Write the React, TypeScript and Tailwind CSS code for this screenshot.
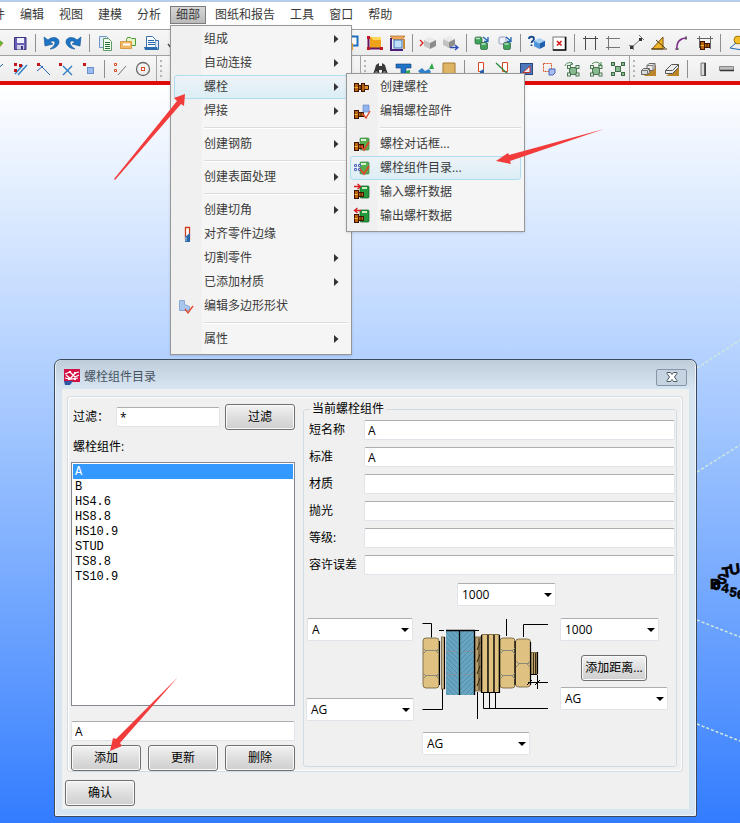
import React, { ReactNode } from "react";

/* ---------- toolbar drawings, all on a 20 x 20 grid ---------- */

const cube = (x: number, y: number, s: number, c: [string, string, string]) => (
  <g>
    <path d={`M${x} ${y + s * 0.25}L${x + s / 2} ${y}L${x + s} ${y + s * 0.25}L${x + s / 2} ${y + s * 0.5}Z`} fill={c[0]} />
    <path d={`M${x} ${y + s * 0.25}L${x + s / 2} ${y + s * 0.5}V${y + s}L${x} ${y + s * 0.75}Z`} fill={c[1]} />
    <path d={`M${x + s} ${y + s * 0.25}L${x + s / 2} ${y + s * 0.5}V${y + s}L${x + s} ${y + s * 0.75}Z`} fill={c[2]} />
  </g>
);
const GREY: [string, string, string] = ["#e9e9e9", "#c2c2c2", "#8c8c8c"];
const BLUE: [string, string, string] = ["#a9d2f5", "#4f97dd", "#1c5fae"];

const greenBox = (x: number, y: number) => (
  <g>
    <rect x={x} y={y} width="7" height="7" rx="1.500" fill="#3fa25a" stroke="#3a6b48" strokeWidth=".8" />
    <path d={`M${x + 1} ${y + 1.5}h4`} stroke="#b7e3bf" strokeWidth="1.500" />
  </g>
);
const whiteBox = (x: number, y: number) => (
  <rect x={x} y={y} width="7" height="7" rx="1.500" fill="#eef1fa" stroke="#7d82ab" strokeWidth=".8" />
);
const boltShape = (x: number, y: number) => (
  <g transform={`translate(${x} ${y})`}>
    <rect x="0.5" y="0.5" width="4" height="8" fill="#b8650f" stroke="#3f1400" />
    <path d="M0.5 4.5H4.5" stroke="#f0b030" />
    <rect x="4.5" y="2.5" width="5" height="4" fill="#b8650f" stroke="#3f1400" />
    <path d="M7 2.5V6.5" stroke="#3f1400" />
  </g>
);
const greenNode = (
  <g fill="#86ba8e" stroke="#3f6b48" strokeWidth=".9">
    <rect x="7.5" y="8.5" width="7" height="7" />
    <rect x="5.5" y="6.5" width="3" height="3" fill="#dff2df" />
    <rect x="14" y="6.500" width="3" height="3" fill="#dff2df" />
    <rect x="5.5" y="14" width="3" height="3" fill="#dff2df" />
    <rect x="14" y="14" width="3" height="3" fill="#dff2df" />
  </g>
);

const art: Record<string, ReactNode> = {
  open: (
    <>
      <path d="M4 6h6l6 4-6 7H4z" fill="#f1d36b" stroke="#b58a24" />
      <path d="M10 5l6 5-4 4z" fill="#62b53d" />
    </>
  ),
  save: (
    <>
      <path d="M4.500 4.500h11.500v12h-11.500z" fill="#6a62b4" stroke="#3a3480" />
      <rect x="7" y="5" width="7" height="5" fill="#eef0fb" />
      <rect x="7" y="12" width="7" height="4.500" fill="#cfd1e6" />
      <rect x="11" y="13" width="2" height="3.500" fill="#3a3480" />
    </>
  ),
  undo: (
    <path d="M3 4l1 9 8-2-3-2c3-2 5-1 5 1 0 2-2 4-5 6 5 0 9-4 9-7 0-5-7-6-11-2z" fill="#1e74c4" stroke="#0f4f93" strokeWidth=".6" />
  ),
  redo: (
    <path d="M17 4l-1 9-8-2 3-2c-3-2-5-1-5 1 0 2 2 4 5 6-5 0-9-4-9-7 0-5 7-6 11-2z" fill="#1e74c4" stroke="#0f4f93" strokeWidth=".6" />
  ),
  copy: (
    <>
      <path d="M4.500 3.500h7l2 2v9h-9z" fill="#e3edf9" stroke="#6d94c4" />
      <path d="M8.500 5.500h5l3 3v9h-8z" fill="#f4fff0" stroke="#5c9a66" />
      <path d="M10 9.500h5M10 11.500h5M10 13.500h5M10 15.500h5" stroke="#1f6e3a" />
    </>
  ),
  folders: (
    <>
      <path d="M8.500 6.500l1-2h3l1 1h4v7h-9z" fill="#e6f6c9" stroke="#4d9b34" />
      <path d="M2.500 8.500h11v7h-11z" rx="1" fill="#f2b866" stroke="#d59a45" />
      <path d="M5 10.500h7v2H5z" fill="#fff" />
    </>
  ),
  printDoc: (
    <>
      <path d="M5.500 3.500h6l3 3v8h-9z" fill="#f7fbff" stroke="#3f6fa8" />
      <path d="M7 7.500h6M7 9.500h9M7 11.500h9" stroke="#2464a8" />
      <path d="M14.500 7.500h3v9h-3" fill="#dfeaf7" stroke="#3f6fa8" />
      <path d="M3 14h13l1 3H4z" fill="#2b6aae" />
    </>
  ),
  cut: <path d="M6 4c5 0 3 6 0 6m-2 1l4 5M8 10c4 0 5 6 1 7" stroke="#555" strokeWidth="1.500" fill="none" />,
  screen: (
    <>
      <rect x="5.500" y="3.500" width="11" height="9" fill="#fff" stroke="#1f6fc0" strokeWidth="2" />
      <path d="M5 10h7v7H5z" fill="#f2a829" />
    </>
  ),
  yellowFrame: (
    <>
      <path d="M6 4h11v11H6z" fill="#eda21a" />
      <path d="M7 4l2 3h8V4z" fill="#ffd75a" />
      <path d="M4.500 4v13M3 15.500h15" stroke="#6a1460" strokeWidth="2" />
      <path d="M3 3h3v3H3zM3 14h3v3H3zM16 14h3v3h-3z" fill="#c01626" />
    </>
  ),
  orangeFrame: (
    <>
      <path d="M3 3h15l-3 4H7z" fill="#f0a75a" stroke="#a05c16" strokeWidth=".6" />
      <rect x="7" y="7" width="8" height="8" fill="#bfe0fb" stroke="#3d74b5" />
      <path d="M4 5v12h12" stroke="#46207a" strokeWidth="2" fill="none" />
      <path d="M17 6v10" stroke="#c98a3c" strokeWidth="2" fill="none" />
    </>
  ),
  cubeIn: (
    <>
      <path d="M2 7l3 3-3 3" stroke="#d81f1f" strokeWidth="1.300" fill="none" />
      {cube(6, 4, 12, GREY)}
    </>
  ),
  cubeOut: (
    <>
      {cube(2, 3, 12, GREY)}
      <path d="M9 14.500h7M14 12l3 2.500-3 2.500" stroke="#2c4fb8" strokeWidth="1.300" fill="none" />
    </>
  ),
  greenPair: (
    <>
      {greenBox(3, 4)}
      {greenBox(8.500, 9.500)}
      <path d="M11 4l5 4m0-4v4.500h-4" stroke="#1f66b5" strokeWidth="1.300" fill="none" />
    </>
  ),
  whitePair: (
    <>
      {whiteBox(4, 4)}
      {greenBox(8.500, 9.500)}
      <path d="M11 4l5 4m0-4v4.500h-4" stroke="#1f66b5" strokeWidth="1.300" fill="none" />
    </>
  ),
  help: (
    <>
      <path d="M3 6c0-3 5-3 5 0 0 2-2.500 2-2.500 4M5.500 11.500v1.500" stroke="#174a8c" strokeWidth="1.800" fill="none" />
      {cube(8, 5, 11, BLUE)}
    </>
  ),
  close: (
    <>
      <rect x="4" y="4" width="13" height="13" fill="#fff" stroke="#777" />
      <path d="M16.500 4v13H4" stroke="#111" strokeWidth="1.500" fill="none" />
      <path d="M8 8l4.500 4.500M12.500 8L8 12.500" stroke="#d81f1f" strokeWidth="1.700" />
    </>
  ),
  dimH: <path d="M5.500 3v14M15.500 3v14M3 5.500h15" stroke="#4a4a4a" fill="none" />,
  dimV: <path d="M5.500 3v14M3 5.500h14M3 14.500h14" stroke="#777" fill="none" />,
  dimFree: (
    <>
      <path d="M5 15L16 5" stroke="#777" />
      <path d="M3 12l5 5M13 2l5 5" stroke="#777" />
      <path d="M4 12.500h3.500v3.500H4zM13 5h3v3h-3z" fill="#333" />
    </>
  ),
  angle: (
    <>
      <path d="M3 16L14 4v12z" fill="#f0b52a" stroke="#7a5108" />
      <path d="M2 16h16M7 7l9 8" stroke="#51370a" />
    </>
  ),
  arc: (
    <>
      <path d="M5 17C4 8 9 5 15 5" stroke="#7a2687" strokeWidth="1.500" fill="none" />
      <path d="M14 3v4M3 16h4" stroke="#555" />
    </>
  ),
  dimBolt: (
    <>
      <path d="M4.500 3v12M15.500 3v13M2 5.500h16" stroke="#666" />
      {boltShape(5, 8)}
    </>
  ),
  pin: (
    <>
      <circle cx="12" cy="7" r="4" fill="#f4be2a" stroke="#a77a10" />
      <path d="M10 10l-6 5 12 2" stroke="#1f66b5" fill="none" />
    </>
  ),
  snapA: <path d="M4 16L16 5" stroke="#2b66b5" />,
  snapB: (
    <>
      <path d="M5 15L13 6M8 16L17 6" stroke="#2b7cc5" strokeWidth="1.300" />
      <path d="M4 4h3v3H4zM9 5h3v3H9zM4 10h3v3H4z" fill="#c01818" />
    </>
  ),
  snapC: (
    <>
      <path d="M7 6l10 10M4 12l6-5" stroke="#2b66b5" />
      <path d="M4 4h3v3H4z" fill="#c01818" />
    </>
  ),
  snapD: (
    <>
      <path d="M7 7l9 9M7 16l9-9" stroke="#2b7cc5" strokeWidth="1.300" />
      <path d="M3 4h3v3H3z" fill="#c01818" />
    </>
  ),
  snapE: (
    <>
      <rect x="8.500" y="8.500" width="6" height="6" fill="#9bbcf0" stroke="#6d8fd0" />
      <path d="M4 4h3v3H4z" fill="#c01818" />
    </>
  ),
  snapF: (
    <>
      <path d="M4.500 4.500h2v2h-2zM4.500 10.500h2v2h-2z" fill="#fff" stroke="#d84a1f" />
      <path d="M8 16l8-9" stroke="#777" />
    </>
  ),
  target: (
    <>
      <circle cx="10" cy="10" r="6.500" fill="none" stroke="#6a6a6a" strokeWidth="1.300" />
      <rect x="8.500" y="8.500" width="3" height="3" fill="#fff" stroke="#d84a1f" />
    </>
  ),
  binoculars: (
    <>
      <path d="M6 6l3-2v3h3V4l3 2 2 7v3h-5v-5H9v5H4v-3z" fill="#3a3a3a" />
      <circle cx="6.500" cy="14" r="2.500" fill="#777" stroke="#222" />
      <circle cx="14.500" cy="14" r="2.500" fill="#777" stroke="#222" />
    </>
  ),
  beam: (
    <>
      <path d="M3 5h15v4h-5v7H8V9H3z" fill="#1f72c4" stroke="#0e3f78" strokeWidth=".6" />
      <path d="M13 12l4-1v6h-4z" fill="#2fa84a" />
    </>
  ),
  weldTool: (
    <>
      <path d="M2 12l4-3 3 3 4-2 2 3-4 4-3-3-3 1z" fill="#2f80cc" />
      <path d="M13 10l3-6 2 6z" fill="#2fa84a" />
    </>
  ),
  plate: <path d="M4 4h12v13H4z" fill="#ddb565" stroke="#a67a2c" />,
  redCol: (
    <>
      <path d="M8.500 3.500h5v9h-5z" fill="#fff" stroke="#d84a1f" />
      <path d="M10 12l4-2v7h-4z" fill="#2f62ad" />
    </>
  ),
  greenCut: (
    <>
      <path d="M9.500 3.500h5v9h-5z" fill="#fff" stroke="#d84a1f" />
      <path d="M3 4l14 13" stroke="#2c8a3f" strokeWidth="1.300" />
    </>
  ),
  triangle: (
    <>
      <rect x="4.500" y="4.500" width="12" height="11" fill="#4d78bd" stroke="#29477a" />
      <path d="M7 13.500L14 7v6.500z" fill="#f0f4fb" stroke="#c03020" />
    </>
  ),
  dashBox: (
    <>
      <rect x="4.500" y="4.500" width="8" height="8" fill="none" stroke="#d84a1f" strokeDasharray="2 1" />
      <path d="M10 10h6v4l-2 2h-4z" fill="#a9bdf2" stroke="#4c64b8" />
    </>
  ),
  meshA: (
    <>
      {greenNode}
      <path d="M3 7c1-4 6-4 8-2M9 3l2 2-3 1" stroke="#4a8a55" fill="none" />
    </>
  ),
  meshB: (
    <>
      {greenNode}
      <path d="M7 5c3-3 7-2 9 1M16 3v3h-3" stroke="#4a8a55" fill="none" />
    </>
  ),
  meshC: (
    <g fill="#86ba8e" stroke="#3f6b48">
      <path d="M5 5l10 10M15 5L5 15" />
      <rect x="7.500" y="7.500" width="5" height="5" />
      <rect x="3.500" y="3.500" width="3" height="3" />
      <rect x="13.500" y="3.500" width="3" height="3" />
      <rect x="3.500" y="13.500" width="3" height="3" />
      <rect x="13.500" y="13.500" width="3" height="3" />
    </g>
  ),
  boxes: (
    <>
      <path d="M5 17h12V6z" fill="#b9842a" />
      <path d="M8 6.500l2-2h6v5l-2 2H8z" fill="#ececec" stroke="#666" />
      <path d="M8 6.500h6v5M14 6.500l2-2" stroke="#777" />
      <path d="M2.500 11.500l2-2h6v4l-2 2h-6z" fill="#dcdcdc" stroke="#666" />
      <path d="M2.500 11.500h6v4M8.500 11.500l2-2" stroke="#777" />
    </>
  ),
  slab: (
    <>
      <path d="M4 17h13V8z" fill="#b98428" />
      <path d="M3.500 11.500l6-6h7v3l-6 6h-7z" fill="#ededed" stroke="#555" />
      <path d="M3.500 11.500h7l6-6" stroke="#555" fill="none" />
    </>
  ),
  colPart: (
    <>
      <path d="M8 4h4.500v12.500H8z" fill="#dcdcdc" stroke="#777" />
      <path d="M12 4v13" stroke="#333" strokeWidth="1.500" />
    </>
  ),
  beamPart: (
    <>
      <path d="M3.500 7.500h14v4h-14z" fill="#bdbdbd" stroke="#888" />
      <path d="M4 11.500h14" stroke="#333" strokeWidth="1.500" />
    </>
  ),
  bolts: (
    <g>
      {boltShape(2, 6)}
      <rect x="9.500" y="6.500" width="3" height="8" fill="#b8650f" stroke="#3f1400" />
      <path d="M12.500 8.500h4v4h-4" fill="#e0912a" stroke="#3f1400" />
    </g>
  ),
  boltEdit: (
    <>
      {boltShape(2, 9)}
      <path d="M11 4h6v7h-6z" fill="#8fb4ee" stroke="#5a82c4" strokeWidth=".6" />
      <path d="M11 13l3 4 4-7" stroke="#e0452a" strokeWidth="1.300" fill="none" />
    </>
  ),
  boltDialog: (
    <>
      <rect x="8" y="4" width="9" height="12" rx="1" fill="#55ad4b" stroke="#3f7f47" strokeWidth=".7" />
      <path d="M9 6h5" stroke="#d4f2cf" strokeWidth="2" />
      {boltShape(2, 8)}
      <path d="M9 12l3 4 5-8" stroke="#e0452a" strokeWidth="1.700" fill="none" />
    </>
  ),
  boltCatalog: (
    <>
      <rect x="8" y="4" width="9" height="12" rx="1" fill="#55ad4b" stroke="#3f7f47" strokeWidth=".7" />
      <path d="M9 6h5" stroke="#d4f2cf" strokeWidth="2" />
      <path d="M2.500 6.500h2v2h-2zM6.500 6.500h2v2h-2zM2.500 10.500h2v2h-2zM6.500 10.500h2v2h-2z" fill="#dfe6fb" stroke="#5366bd" />
      <path d="M8 11l4 5 5-8" stroke="#e0452a" strokeWidth="1.700" fill="none" />
    </>
  ),
  boltImport: (
    <>
      <rect x="8" y="4" width="9" height="12" rx="1" fill="#239a3c" stroke="#0d5c20" strokeWidth=".7" />
      <path d="M10 6h5" stroke="#c5eec5" strokeWidth="2" />
      {boltShape(2, 8)}
      <path d="M2 4.500h6M5.500 2l3 2.500-3 2.500" stroke="#d81f1f" strokeWidth="1.300" fill="none" />
    </>
  ),
  boltExport: (
    <>
      <rect x="8" y="4" width="9" height="12" rx="1" fill="#239a3c" stroke="#0d5c20" strokeWidth=".7" />
      <path d="M10 6h5" stroke="#c5eec5" strokeWidth="2" />
      {boltShape(2, 8)}
      <path d="M3 4.500h6M5.500 2l-3 2.500 3 2.500" stroke="#d81f1f" strokeWidth="1.300" fill="none" />
    </>
  ),
  alignEdge: (
    <>
      <path d="M9.500 3.500h4v12h-4z" fill="#fff" stroke="#cc3d1c" strokeWidth="1.300" />
      <path d="M9 18v-5l5-4v9z" fill="#2a66a8" />
      <path d="M10 17v-4" stroke="#bcd6f2" />
    </>
  ),
  polygonEdit: (
    <>
      <path d="M3.500 4.500h5v4l5 2v4h-10z" fill="#a8c6ee" stroke="#8aa8d4" />
      <path d="M9 13l3 4 5-7" stroke="#e0452a" strokeWidth="1.300" fill="none" />
    </>
  ),
};

const Glyph = ({ name }: { name: string }) => (
  <svg viewBox="0 0 20 20" className="h-5 w-5 shrink-0" fill="none" aria-hidden="true">
    {art[name]}
  </svg>
);

/* ---------- toolbars ---------- */

const Tools = ({ items }: { items: string[] }) => (
  <>
    {items.map((name, i) =>
      name === "|" ? (
        <span key={i} className="flex w-2 shrink-0 items-center justify-center">
          <span className="h-[18px] w-px bg-[#8f8f8f]" />
        </span>
      ) : (
        <button key={i} type="button" aria-label={name} className="flex w-[23px] shrink-0 items-center justify-center">
          <Glyph name={name} />
        </button>
      ),
    )}
  </>
);

const Grip = () => (
  <span className="flex w-2 shrink-0 flex-col items-center justify-center gap-[3px] border-l border-[#a5a5a5]">
    <span className="h-[2px] w-[2px] bg-[#b5b5b5]" />
    <span className="h-[2px] w-[2px] bg-[#b5b5b5]" />
    <span className="h-[2px] w-[2px] bg-[#b5b5b5]" />
    <span className="h-[2px] w-[2px] bg-[#b5b5b5]" />
  </span>
);

const barClass = "flex h-[26px] overflow-hidden border-t border-[#a0a0a0] bg-linear-to-b from-[#f7f7f7] to-[#ececec]";

/* ---------- menus ---------- */

type Entry = { label: string; icon?: string; arrow?: boolean; active?: boolean; sub?: Entry[] } | null;

const boltMenu: Entry[] = [
  { label: "创建螺栓", icon: "bolts" },
  { label: "编辑螺栓部件", icon: "boltEdit" },
  null,
  { label: "螺栓对话框...", icon: "boltDialog" },
  { label: "螺栓组件目录...", icon: "boltCatalog", active: true },
  { label: "输入螺杆数据", icon: "boltImport" },
  { label: "输出螺杆数据", icon: "boltExport" },
];

const detailMenu: Entry[] = [
  { label: "组成", arrow: true },
  { label: "自动连接", arrow: true },
  { label: "螺栓", arrow: true, active: true, sub: boltMenu },
  { label: "焊接", arrow: true },
  null,
  { label: "创建钢筋", arrow: true },
  null,
  { label: "创建表面处理", arrow: true },
  null,
  { label: "创建切角", arrow: true },
  { label: "对齐零件边缘", icon: "alignEdge" },
  { label: "切割零件", arrow: true },
  { label: "已添加材质", arrow: true },
  { label: "编辑多边形形状", icon: "polygonEdit" },
  null,
  { label: "属性", arrow: true },
];

const Menu = ({ entries, place }: { entries: Entry[]; place: string }) => (
  <ul
    role="menu"
    className={`absolute border border-[#979797] bg-[#f5f5f5] bg-linear-to-r from-[#f0f0f0] from-[30px] to-[#f5f5f5] to-[31px] px-[3px] pt-px pb-[3px] ${place}`}
  >
    {entries.map((e, i) =>
      e === null ? (
        <li key={i} role="separator" className="flex h-[9px] items-center pl-[30px]">
          <span className="h-[2px] w-full border-b border-white bg-[#dcdcdc]" />
        </li>
      ) : (
        <li key={i} role="none" className="relative">
          <button
            type="button"
            role="menuitem"
            className={`flex h-6 w-full items-center rounded-[3px] border text-left whitespace-nowrap ${
              e.active ? "border-[#aedcf0] bg-linear-to-b from-[#edf3f7] to-[#dceef5]" : "border-transparent"
            }`}
          >
            <span className="flex w-[29px] shrink-0 justify-start pl-px">{e.icon && <Glyph name={e.icon} />}</span>
            <span className="flex-1">{e.label}</span>
            {e.arrow && (
              <svg viewBox="0 0 5 8" className="mr-2 h-2 w-[5px]" aria-hidden="true">
                <path d="M0 0l4.500 4L0 8z" fill="#333" />
              </svg>
            )}
          </button>
          {e.sub && <Menu entries={e.sub} place="-top-[2px] left-[172px] w-[179px] shadow-sm" />}
        </li>
      ),
    )}
  </ul>
);

/* ---------- form parts ---------- */

const fieldClass =
  "h-5 min-w-0 rounded-[2px] border border-[#e2e3ea] border-t-[#abadb3] bg-white px-[3px] text-black outline-none";

const Push = ({ children, size = "w-[70px]" }: { children: ReactNode; size?: string }) => (
  <button
    type="button"
    className={`h-[26px] shrink-0 rounded-[3px] border border-[#707070] bg-linear-to-b from-[#f3f3f3] via-[#dedede] via-50% to-[#cfcfcf] text-center whitespace-nowrap shadow-[inset_0_0_0_1px_#fafafa] ${size}`}
  >
    {children}
  </button>
);

const Drop = ({ label, value, size }: { label: string; value: string; size: string }) => (
  <span className={`relative block shrink-0 ${size}`}>
    <select
      aria-label={label}
      defaultValue={value}
      className="h-[23px] w-full appearance-none rounded-[2px] border border-[#e2e3ea] border-t-[#abadb3] bg-white px-1 text-black outline-none"
    >
      <option>{value}</option>
    </select>
    <svg viewBox="0 0 8 4" className="pointer-events-none absolute top-[10px] right-[4px] h-1 w-2" aria-hidden="true">
      <path d="M0 0h8L4 4z" fill="#000" />
    </svg>
  </span>
);

const assemblies = ["A", "B", "HS4.6", "HS8.8", "HS10.9", "STUD", "TS8.8", "TS10.9"];
const fields = [
  ["短名称", "A"],
  ["标准", "A"],
  ["材质", ""],
  ["抛光", ""],
  ["等级:", ""],
  ["容许误差", ""],
];

/* Exploded bolt: head, washer, plates, nuts and their leader lines */
const BoltDiagram = () => (
  <svg viewBox="0 0 128 104" className="h-[104px] w-[128px]" role="img" aria-label="螺栓">
    <defs>
      <pattern id="hatchA" width="5" height="5" patternUnits="userSpaceOnUse">
        <path d="M0 0l5 5" stroke="#4b88a1" strokeWidth=".7" />
      </pattern>
      <pattern id="hatchB" width="5" height="5" patternUnits="userSpaceOnUse">
        <path d="M5 0L0 5" stroke="#4b88a1" strokeWidth=".7" />
      </pattern>
    </defs>
    <g fill="none" stroke="#000" strokeWidth="1">
      <path d="M0.500 5.500h9v14M0.500 91.500h20v-21M84.500 1v17M101.500 19V6.500h24.500M55.500 74v27M61.500 75v15.500h64.500M67.500 75v15M73.500 75v15" />
      <path d="M17 12.500h41" strokeDasharray="5 2" />
    </g>
    <g fill="#dfc182" stroke="#6d5a34" strokeWidth=".8">
      <rect x="1" y="20" width="16" height="50" rx="3" />
      <rect x="19.500" y="19" width="3" height="52" fill="#cbb48a" />
      <rect x="53" y="19" width="6" height="54" fill="#b89e70" />
      <rect x="60" y="16.500" width="6" height="58" />
      <rect x="66" y="16.500" width="6" height="58" />
      <rect x="72" y="16.500" width="5" height="58" />
      <rect x="78" y="20" width="15" height="50" rx="3" />
      <rect x="93.500" y="21" width="15" height="48" rx="3" />
      <rect x="109" y="34.500" width="6" height="22" fill="#b8a071" />
    </g>
    <path d="M111.500 35v21M113.500 35v21M57 20v52M55 32l3-8M55 44l3-8M55 56l3-8M55 68l3-8" stroke="#3b2c10" />
    <path
      d="M17.500 23v44M22.500 19v52M93 23v44M108.500 24v43M77.500 17v58M59.500 17v58M66 17v58M72 17v58M115.500 34v22M60 74.500h17"
      stroke="#000"
      strokeWidth="1.200"
    />
    <path d="M3 32.500h13M3 57.500h13M80 32.500h11M80 57.500h11M96 45.500h11" stroke="#8a8a7a" />
    <path
      d="M1 30l3 3-3 3M17 30l-3 3 3 3M1 55l3 3-3 3M17 55l-3 3 3 3M78 30l3 3-3 3M93 30l-3 3 3 3M78 55l3 3-3 3M93 55l-3 3 3 3M94 43l3 3-3 3M108 43l-3 3 3 3"
      stroke="#8a8a7a"
      fill="none"
    />
    <rect x="24" y="12" width="29" height="65" fill="#68a3bf" />
    <rect x="24" y="12" width="14" height="65" fill="url(#hatchA)" />
    <rect x="38" y="12" width="15" height="65" fill="url(#hatchB)" />
    <path d="M24 33.500h29M24 56.500h29" stroke="#8a8f98" strokeDasharray="4 2" />
    <path d="M24 12.500h29M37.500 12v65M52.500 12v65" stroke="#000" strokeWidth="1.300" fill="none" />
    <path d="M106 64.500h20M115.500 57v14M105 67l5-5M113 67l5-5M109 56.500h6" stroke="#000" fill="none" />
  </svg>
);

const Dialog = () => (
  <section
    role="dialog"
    aria-label="螺栓组件目录"
    className="absolute top-[274px] left-[54px] w-[643px] rounded-t-[7px] rounded-b-[2px] border border-[#3c4a5a] bg-[#d7e4f2] px-[7px] pb-[7px] shadow-[inset_0_0_0_1px_#eef4fa]"
  >
    <header className="-mx-[6px] flex h-7 items-center rounded-t-[6px] bg-linear-to-b from-[#bfcdda] to-[#d7e4f2] pt-[6px] pr-2 pl-[8px]">
      <svg viewBox="0 0 16 16" className="h-4 w-4" aria-hidden="true">
        <path d="M0 0h16v13H0z" fill="#d41145" />
        <path d="M0 12h9l-3 4H1z" fill="#2d57a5" />
        <path d="M1 5l5-2 5 5 4-2M1 9l5 1 5-6 4-1M2 6l5 4 7-1" stroke="#fff" strokeWidth="1.200" fill="none" />
        <path d="M5 2h2v2H5zM10 3h2v2h-2zM4 9h2v2H4zM10 9h2v2h-2z" fill="#fff" />
      </svg>
      <h1 className="ml-1 flex-1 text-[#46535f]">螺栓组件目录</h1>
      <button
        type="button"
        aria-label="关闭"
        className="flex h-[17px] w-[31px] items-center justify-center rounded-[2px] border border-[#8595a8] bg-[#c6d4e2]"
      >
        <svg viewBox="0 0 12 10" className="h-[10px] w-3" aria-hidden="true">
          <path d="M1 .5h3.500L6 2.500 7.500.5H11v1L8.500 5 11 8.500v1H7.500L6 7.500l-1.500 2H1v-1L3.500 5 1 1.500z" fill="#fff" stroke="#4a5866" />
        </svg>
      </button>
    </header>

    <div className="mt-px bg-[#f0f0f0] px-[3px] pt-[7px] pb-[3px]">
      <div className="mr-[3px] ml-[2px] flex rounded-[3px] border border-[#d2dbe2] pt-[7px] pr-[5px] pl-[3px] shadow-[inset_0_0_0_1px_#fff]">
        {/* filter, list of assemblies and its editing row */}
        <div className="w-[224px] shrink-0">
          <div className="flex items-center">
            <label htmlFor="filter" className="w-[45px] pl-[2px]">
              过滤：
            </label>
            <input id="filter" defaultValue="*" className={`${fieldClass} w-[104px]`} />
            <span className="ml-auto flex">
              <Push>过滤</Push>
            </span>
          </div>
          <h2 id="assemblies" className="mt-2 pl-[2px]">
            螺栓组件:
          </h2>
          <ul
            role="listbox"
            aria-labelledby="assemblies"
            className="mt-[6px] h-[244px] border border-[#828790] bg-white p-px font-['Liberation_Mono','Noto_Sans_CJK_SC',monospace] leading-[15px]"
          >
            {assemblies.map((a, i) => (
              <li
                key={a}
                role="option"
                aria-selected={i === 0}
                className={`h-[15px] px-[2px] pt-px ${i === 0 ? "bg-[#3399ff] text-white" : "text-black"}`}
              >
                {a}
              </li>
            ))}
          </ul>
          <input aria-label="螺栓组件" defaultValue="A" className={`${fieldClass} mt-[15px] w-full`} />
          <div className="mt-1 flex justify-between">
            <Push>添加</Push>
            <Push>更新</Push>
            <Push>删除</Push>
          </div>
        </div>

        {/* properties of the selected assembly */}
        <fieldset className="-mt-1 mb-1 ml-2 min-w-0 flex-1 rounded-[3px] border border-[#d2dbe2] pr-px pl-[2px]">
          <legend className="ml-[4px] h-[18px] px-[2px]">当前螺栓组件</legend>
          <div className="mt-[2px] flex flex-col gap-[7px]">
            {fields.map(([name, value]) => (
              <label key={name} className="flex items-center">
                <span className="w-[58px] shrink-0 pl-[3px]">{name}</span>
                <input defaultValue={value} className={`${fieldClass} flex-1`} />
              </label>
            ))}
          </div>

          <div className="mt-2 flex pb-2">
            <div className="flex w-[108px] flex-col items-center pt-[35px]">
              <Drop label="螺栓头" value="A" size="w-[106px]" />
              <div className="mt-[57px]">
                <Drop label="垫圈 1" value="AG" size="w-[108px]" />
              </div>
            </div>
            <div className="ml-2 flex w-[134px] flex-col">
              <div className="flex justify-end">
                <Drop label="螺母 1" value="1000" size="w-[99px]" />
              </div>
              <div className="mt-3">
                <BoltDiagram />
              </div>
              <div className="mt-[10px]">
                <Drop label="垫圈 2" value="AG" size="w-[108px]" />
              </div>
            </div>
            <div className="ml-1 flex w-[108px] flex-col pt-[35px]">
              <Drop label="螺母 2" value="1000" size="w-[99px]" />
              <div className="mt-[14px] flex justify-center">
                <Push size="w-[66px]">添加距离...</Push>
              </div>
              <div className="mt-[6px]">
                <Drop label="垫圈 3" value="AG" size="w-[108px]" />
              </div>
            </div>
          </div>
        </fieldset>
      </div>
      <div className="mt-2">
        <Push>确认</Push>
      </div>
    </div>
  </section>
);

export default function App() {
  return (
    <div className="flex min-h-screen flex-col overflow-hidden bg-white font-['Open_Sans','Noto_Sans_CJK_SC',sans-serif] text-xs leading-[18px] text-black">
      <div className="h-[2px] bg-[#b5cdea]" />
      <nav className="relative z-20 -ml-[25px] flex h-[27px] items-center gap-[3px] pb-px whitespace-nowrap text-[#3a3a3a]">
        {["文件", "编辑", "视图", "建模", "分析"].map((m) => (
          <button key={m} type="button" className="px-[6px]">
            {m}
          </button>
        ))}
        <div className="relative">
          <button
            type="button"
            aria-haspopup="menu"
            aria-expanded="true"
            className="block bg-linear-to-b from-[#d8d8d8] to-[#b9b9b9] px-[6px] shadow-[inset_0_0_0_1px_#7d7d7d]"
          >
            细部
          </button>
          <Menu entries={detailMenu} place="top-[19px] left-0 w-[182px] shadow-sm" />
        </div>
        {["图纸和报告", "工具", "窗口", "帮助"].map((m) => (
          <button key={m} type="button" className="px-[6px]">
            {m}
          </button>
        ))}
      </nav>

      <div className={barClass}>
        <div className="-ml-[15px] flex">
          <Tools items={["open", "save", "|", "undo", "redo", "|", "copy", "folders", "printDoc", "cut"]} />
          <span className="w-[154px] shrink-0" />
          <Tools
            items={["screen", "yellowFrame", "orangeFrame", "|", "cubeIn", "cubeOut", "|", "greenPair", "whitePair", "|", "help", "close", "|", "dimH", "dimV", "dimFree", "angle", "arc", "dimBolt", "|", "pin"]}
          />
        </div>
      </div>
      <div className={barClass}>
        <div className="-ml-[15px] flex">
          <Tools items={["snapA", "snapB", "snapC", "snapD", "snapE", "|", "snapF", "target"]} />
          <span className="w-[2px] shrink-0" />
          <Grip />
          <span className="w-[196px] shrink-0" />
          <Grip />
          <Tools items={["binoculars", "beam", "weldTool", "plate", "|", "redCol", "greenCut", "triangle", "dashBox", "meshA", "meshB", "meshC"]} />
          <Grip />
          <Tools items={["boxes", "slab", "|", "colPart", "beamPart"]} />
        </div>
      </div>
      <div className="h-[4px] shrink-0 bg-[#e00b0b]" />

      {/* model view */}
      <main className="relative flex-1 bg-linear-to-b from-white to-[#327cff]">
        <svg viewBox="0 0 45 500" className="absolute top-[245px] left-[695px] h-[500px] w-[45px]" aria-hidden="true">
          <g stroke="#cfe8dc" strokeWidth="1.500" strokeDasharray="3 2" fill="none">
            <path d="M2 38L45 10" />
            <path d="M2 142L45 115" />
            <path d="M2 290L45 307" />
            <path d="M2 394L45 411" />
          </g>
          <g fill="#000" stroke="#000" strokeWidth=".6" fontWeight="bold" fontSize="15" fontFamily="Liberation Sans, sans-serif">
            <text transform="translate(15 259)">B</text>
            <text transform="translate(22 254)">S</text>
            <text transform="translate(28 248) rotate(-8)">T</text>
            <text transform="translate(35 245) rotate(-8)">U</text>
            <g fontSize="13">
              <text transform="translate(18 260)">0</text>
              <text transform="translate(26 262) rotate(8)">4</text>
              <text transform="translate(34 266) rotate(8)">5</text>
              <text transform="translate(42 269)">6</text>
            </g>
          </g>
        </svg>
        <Dialog />
      </main>

      {/* red pointers over the window */}
      <svg viewBox="0 0 740 823" className="pointer-events-none absolute top-0 left-0 z-30 h-[823px] w-[740px]" fill="#f23c3c" aria-hidden="true">
        <path d="M114 179L177 101L174 98L185 94L184 106L181 104L115 180Z" />
        <path d="M604 129L509 155L508 153L496 161L511 164L510 161Z" />
        <path d="M178 677L116 739L113 738L110 751L122 746L120 743Z" />
      </svg>
    </div>
  );
}
